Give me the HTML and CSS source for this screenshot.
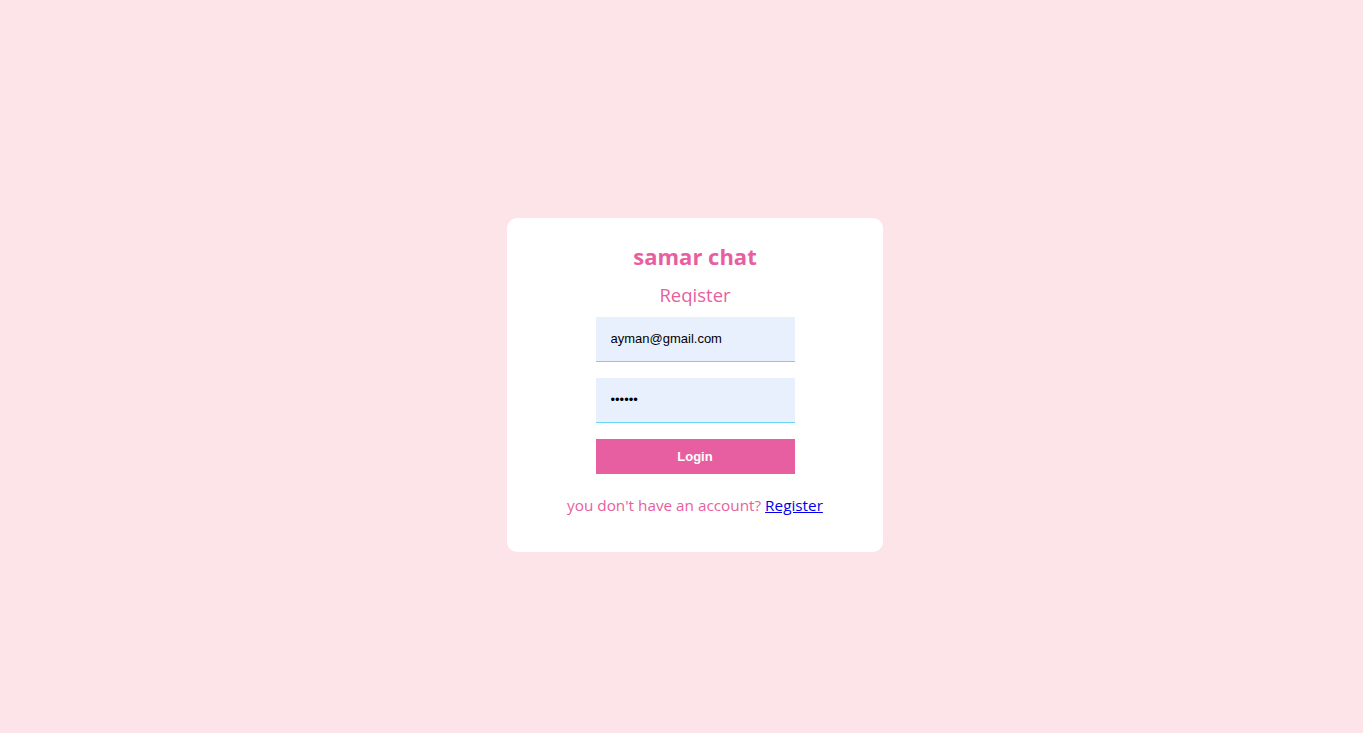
FILE: index.html
```html
<!DOCTYPE html>
<html>
<head>
<meta charset="utf-8">
<link rel="stylesheet" href="styles.css">
</head>
<body>
<div class="page">
  <div class="card">
    <span class="logo">samar chat</span>
    <span class="subtitle">Reqister</span>
    <form class="form">
      <input class="field" type="email" value="ayman@gmail.com">
      <input class="field" type="password" value="123456">
      <button class="btn" type="button">Login</button>
    </form>
    <p class="note">you don't have an account? <a href="#" class="link">Register</a></p>
  </div>
</div>
</body>
</html>
```
FILE: styles.css
```css
html, body {
  margin: 0;
  padding: 0;
}
body {
  background: #fde4e8;
  font-family: "Open Sans", "Noto Sans", sans-serif;
}
.page {
  height: 733px;
  box-sizing: border-box;
  padding: 36px 0 0 27px;
  display: flex;
  align-items: center;
  justify-content: center;
}
.card {
  width: 376px;
  box-sizing: border-box;
  background: #ffffff;
  border-radius: 10px;
  padding: 22px 60px 36px;
  display: flex;
  flex-direction: column;
  align-items: center;
  gap: 10px;
}
.logo {
  color: #e75fa0;
  font-weight: 700;
  font-size: 22px;
  line-height: 32px;
}
.subtitle {
  color: #e75fa0;
  font-size: 18.5px;
  line-height: 26px;
}
.form {
  display: flex;
  flex-direction: column;
  gap: 16px;
  margin-top: -1px;
}
.field {
  width: 199px;
  height: 45px;
  box-sizing: border-box;
  border: none;
  border-bottom: 1px solid #6ad6f5;
  background: #e8f0fe;
  padding: 0 15px;
  font-family: "Liberation Sans", Arial, sans-serif;
  font-size: 13px;
  color: #000;
  outline: none;
}
.btn {
  width: 199px;
  height: 35px;
  border: none;
  background: #e75fa0;
  color: #fff;
  font-family: "Liberation Sans", Arial, sans-serif;
  font-weight: 700;
  font-size: 13px;
}
.note {
  margin: 10px 0 0;
  color: #e75fa0;
  font-size: 15.3px;
  line-height: 22px;
}
.link {
  color: #0000ee;
}
```
